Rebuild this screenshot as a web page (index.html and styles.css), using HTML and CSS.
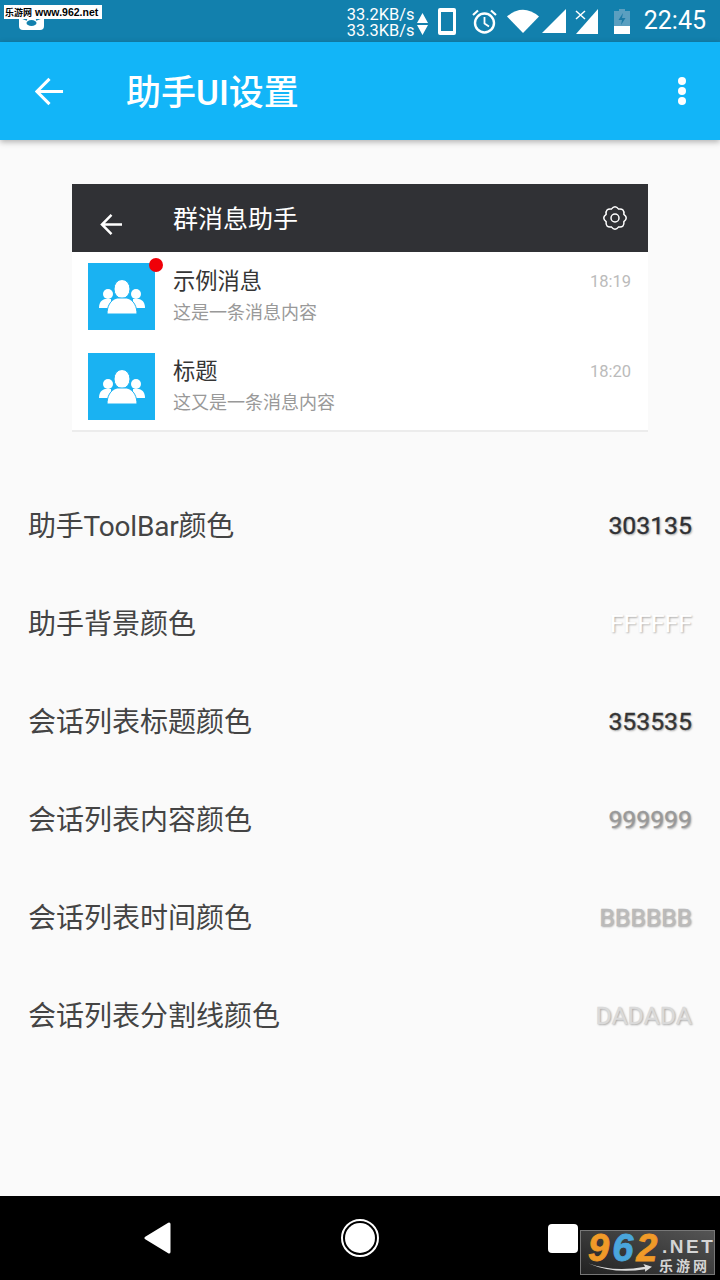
FILE: index.html
```html
<!DOCTYPE html>
<html lang="zh-CN">
<head>
  <meta charset="utf-8" />
  <meta name="viewport" content="width=device-width, initial-scale=1" />
  <title>助手UI设置</title>
  <link rel="stylesheet" href="styles.css">
</head>
<body>
  <div class="phone">
    <!-- status bar -->
    <div class="statusbar">
      <svg class="pig" viewBox="0 0 25 15"><path d="M0 0h25v11q0 4-4 4H4q-4 0-4-4z" fill="#fff"/><ellipse cx="12.500" cy="8" rx="5" ry="3" fill="#1280ad"/><path d="M3 3l5 2M22 3l-5 2" stroke="#1280ad" stroke-width="1.500"/></svg>
      <div class="speed">33.2KB/s<br>33.3KB/s</div>
      <svg class="updown" viewBox="0 0 11 22"><path d="M5.500 0L11 10H0z M0 12h11L5.500 22z" fill="#fff"/></svg>
      <svg class="ic-phone" viewBox="0 0 18 27"><path d="M2 0h14a2 2 0 0 1 2 2v23a2 2 0 0 1-2 2H2a2 2 0 0 1-2-2V2a2 2 0 0 1 2-2zm1 4v19h12V4z" fill="#fff" fill-rule="evenodd"/></svg>
      <svg class="ic-alarm" viewBox="0 0 25 25" fill="none" stroke="#fff"><circle cx="12.500" cy="14" r="9.500" stroke-width="2.400"/><path d="M12.500 8v6.500l4.500 3" stroke-width="1.800"/><path d="M1 6l5-4.500M24 6l-5-4.500" stroke-width="2.200"/></svg>
      <svg class="ic-wifi" viewBox="0 0 32 24"><path d="M0 7.500Q16-6 32 7.500L16 24z" fill="#fff"/></svg>
      <svg class="ic-signal" viewBox="0 0 24 24"><path d="M24 0v24H0z" fill="#fff"/></svg>
      <svg class="ic-signal2" viewBox="0 0 24 25"><path d="M23 0v25H1z" fill="#fff"/><path d="M1 2l9 8M10 2l-9 8" stroke="#fff" stroke-width="1.500"/></svg>
      <svg class="ic-battery" viewBox="0 0 16 25"><path d="M5 0h6v2h5v23H0V2h5z" fill="#5b9fc0"/><path d="M0 17h16v8H0z" fill="#fff"/><path d="M9 4L4.500 11H8l-1 5 4.500-7H8z" fill="#1c7aa5"/></svg>
      <span class="clock">22:45</span>
    </div>

    <!-- app toolbar -->
    <header class="toolbar">
      <svg class="back" viewBox="0 0 30 30" fill="none" stroke="#fff" stroke-width="3.200"><path d="M29 15H3M15 2L2 15l13 13"/></svg>
      <h1 class="toolbar-title">助手UI设置</h1>
      <div class="more"><i></i><i></i><i></i></div>
    </header>

    <main class="content">
      <!-- preview card -->
      <section class="preview">
        <div class="preview-head">
          <svg class="preview-back" viewBox="0 0 24 22" fill="none" stroke="#fff" stroke-width="2.600"><path d="M23 11H2M12 1L2 11l10 10"/></svg>
          <span class="preview-title">群消息助手</span>
          <svg class="gear" viewBox="0 0 24 24" fill="none" stroke="#fff" stroke-width="1.500" stroke-linejoin="round"><path d="M20.870 8.330Q25.600 12 20.870 15.670Q21.620 21.620 15.670 20.870Q12 25.600 8.330 20.870Q2.380 21.620 3.130 15.670Q-1.600 12 3.130 8.330Q2.380 2.380 8.330 3.130Q12-1.600 15.670 3.130Q21.620 2.380 20.870 8.330z"/><circle cx="12" cy="12" r="4"/></svg>
        </div>
        <div class="msg">
          <div class="avatar">
            <svg viewBox="0 0 46 34" fill="#fff"><circle cx="9" cy="14" r="5"/><path d="M0 28c0-5 2-8 6-9h6v9z"/><circle cx="37" cy="14" r="5"/><path d="M46 28c0-5-2-8-6-9h-6v9z"/><g stroke="#1ab2f2"><ellipse cx="23" cy="9" rx="8" ry="9.500"/><path d="M8 34c0-7 3-14 10-16h10c7 2 10 9 10 16z"/></g></svg>
            <b class="dot"></b>
          </div>
          <div class="msg-text">
            <div class="msg-title">示例消息</div>
            <div class="msg-sub">这是一条消息内容</div>
          </div>
          <span class="msg-time">18:19</span>
        </div>
        <div class="msg">
          <div class="avatar">
            <svg viewBox="0 0 46 34" fill="#fff"><circle cx="9" cy="14" r="5"/><path d="M0 28c0-5 2-8 6-9h6v9z"/><circle cx="37" cy="14" r="5"/><path d="M46 28c0-5-2-8-6-9h-6v9z"/><g stroke="#1ab2f2"><ellipse cx="23" cy="9" rx="8" ry="9.500"/><path d="M8 34c0-7 3-14 10-16h10c7 2 10 9 10 16z"/></g></svg>
          </div>
          <div class="msg-text">
            <div class="msg-title">标题</div>
            <div class="msg-sub">这又是一条消息内容</div>
          </div>
          <span class="msg-time">18:20</span>
        </div>
      </section>

      <!-- colour settings -->
      <ul class="settings">
        <li><span class="label label-latin">助手ToolBar颜色</span><span class="val val-toolbar">303135</span></li>
        <li><span class="label">助手背景颜色</span><span class="val val-bg">FFFFFF</span></li>
        <li><span class="label">会话列表标题颜色</span><span class="val val-title">353535</span></li>
        <li><span class="label">会话列表内容颜色</span><span class="val val-content">999999</span></li>
        <li><span class="label">会话列表时间颜色</span><span class="val val-time">BBBBBB</span></li>
        <li><span class="label">会话列表分割线颜色</span><span class="val val-line">DADADA</span></li>
      </ul>
    </main>

    <!-- nav bar -->
    <nav class="navbar">
      <svg class="nav-back" viewBox="0 0 27 32"><path d="M25 2v28L2 16z" fill="#fff" stroke="#fff" stroke-width="3" stroke-linejoin="round"/></svg>
      <div class="nav-home"><i></i></div>
      <div class="nav-recent"></div>
    </nav>

    <!-- watermarks -->
    <div class="wm-top"><span>乐游网</span>www.962.net</div>
    <div class="wm-bottom">
      <div class="wm-num"><span class="or">9</span><span class="bl">6</span><span class="or">2</span></div>
      <div class="wm-net">.NET</div>
      <div class="wm-cn">乐游网</div>
      <svg class="wm-swoosh" viewBox="0 0 74 12"><path d="M0 1Q30 12 66 5l-2-3 10 3-8 6 0-3Q30 14 0 1z" fill="#ddd"/></svg>
    </div>
  </div>
</body>
</html>
```

FILE: styles.css
```css
*{
    box-sizing:border-box;
}
html,body{
    margin:0;
    padding:0;
}
body{
    font-family:Roboto,"Noto Sans CJK SC",sans-serif;
    background:#fafafa;
}
.phone{
    position:relative;
    width:720px;
    height:1280px;
    display:flex;
    flex-direction:column;
    overflow:hidden;
    background:#fafafa;
}

/* status bar */
.statusbar{
    height:42px;
    flex:none;
    background:#1280ad;
    color:#fff;
    display:flex;
    align-items:center;
    padding:0 14px 0 19px;
}
.pig{
    width:25px;
    height:15px;
    align-self:flex-start;
    margin-top:15px;
    margin-right:auto;
}
.speed{
    font-size:16.400px;
    line-height:16px;
    width:70px;
    margin-top:3px;
}
.updown{
    width:11px;
    height:22px;
    margin-top:5px;
    margin-right:10px;
}
.ic-phone{
    width:18px;
    height:27px;
    margin-right:16px;
}
.ic-alarm{
    width:25px;
    height:25px;
    margin-right:10px;
}
.ic-wifi{
    width:32px;
    height:24px;
    margin-right:3px;
}
.ic-signal{
    width:24px;
    height:24px;
    margin-right:9px;
}
.ic-signal2{
    width:24px;
    height:25px;
    margin-top:1px;
    margin-right:15px;
}
.ic-battery{
    width:16px;
    height:25px;
    margin-right:14px;
}
.clock{
    font-size:25px;
    line-height:30px;
}

/* toolbar */
.toolbar{
    height:98px;
    flex:none;
    background:#12b5f8;
    display:flex;
    align-items:center;
    padding:0 34px 0 35px;
    box-shadow:0 2px 6px rgba(0,0,0,.3);
    position:relative;
}
.back{
    width:29px;
    height:29px;
    margin-right:62px;
}
.toolbar-title{
    margin:0 0 4px;
    font-size:35px;
    font-weight:500;
    color:#fff;
    flex:1;
}
.more{
    display:flex;
    flex-direction:column;
    gap:2px;
}
.more i{
    display:block;
    width:8px;
    height:8px;
    border-radius:50%;
    background:#fff;
}

/* preview */
.content{
    flex:1;
    padding-top:44px;
}
.preview{
    width:576px;
    height:248px;
    margin:0 auto;
    background:#fff;
    border-bottom:2px solid #ececec;
}
.preview-head{
    height:68px;
    background:#303135;
    display:flex;
    align-items:center;
    padding:0 21px 0 28px;
}
.preview-back{
    width:23px;
    height:21px;
    margin-top:12px;
    margin-right:50px;
}
.preview-title{
    flex:1;
    font-size:25px;
    color:#fff;
    margin-bottom:3px;
}
.gear{
    width:24px;
    height:24px;
}
.msg{
    height:90px;
    display:flex;
    align-items:flex-start;
    padding:11px 17px 0 16px;
}
.avatar{
    position:relative;
    width:67px;
    height:67px;
    flex:none;
    background:#1ab2f2;
    display:flex;
    align-items:center;
    justify-content:center;
    margin-right:18px;
}
.avatar svg{
    width:46px;
    height:34px;
}
.dot{
    position:absolute;
    top:-5px;
    right:-8px;
    width:14px;
    height:14px;
    border-radius:50%;
    background:#f00008;
}
.msg-text{
    flex:1;
}
.msg-title{
    font-size:22.250px;
    line-height:30px;
    color:#353535;
    margin-top:3px;
}
.msg-sub{
    font-size:18px;
    line-height:26px;
    color:#999;
    margin-top:4px;
}
.msg-time{
    font-size:16.500px;
    line-height:22px;
    color:#bbb;
    margin-top:8px;
}

/* settings list */
.settings{
    list-style:none;
    margin:45px 0 0;
    padding:0 28px;
}
.settings li{
    height:98px;
    display:flex;
    align-items:center;
    justify-content:space-between;
}
.label{
    font-size:28px;
    color:#444;
    margin-bottom:4px;
}
.label-latin{
    letter-spacing:-.2px;
}
.val{
    font-size:24.800px;
    font-weight:400;
    margin-bottom:1px;
    -webkit-text-stroke:.3px currentColor;
    text-shadow:1px 1px 2px rgba(0,0,0,.35);
}
.val-toolbar{ color:#303135; }
.val-bg{ color:#fff; }
.val-title{ color:#353535; }
.val-content{ color:#999; }
.val-time{ color:#bbb; }
.val-line{ color:#dadada; }

/* nav bar */
.navbar{
    height:84px;
    flex:none;
    background:#000;
    display:flex;
    align-items:center;
    justify-content:space-between;
    padding:0 142px 0 144px;
}
.nav-back{
    width:27px;
    height:32px;
}
.nav-home{
    width:38px;
    height:38px;
    border:2px solid #fff;
    border-radius:50%;
    padding:2px;
}
.nav-home i{
    display:block;
    width:100%;
    height:100%;
    border-radius:50%;
    background:#fff;
}
.nav-recent{
    width:30px;
    height:29px;
    border-radius:4px;
    background:#fff;
}

/* watermarks */
.wm-top{
    position:absolute;
    left:4px;
    top:5px;
    width:98px;
    height:14px;
    background:#fff;
    color:#000;
    font-family:"Liberation Sans","Noto Sans CJK SC",sans-serif;
    font-size:10.500px;
    font-weight:700;
    line-height:14px;
    white-space:nowrap;
    padding-left:1px;
}
.wm-top span{
    font-size:9px;
    margin-right:3px;
}
.wm-bottom{
    position:absolute;
    left:580px;
    top:1230px;
    width:135px;
    height:45px;
    background:linear-gradient(20deg,#222,#555);
    border:1px solid #777;
}
.wm-num{
    position:absolute;
    left:7px;
    top:-2px;
    font-family:"Liberation Sans",sans-serif;
    font-size:38px;
    font-weight:700;
    font-style:italic;
    line-height:38px;
    letter-spacing:3px;
    -webkit-text-stroke:.8px currentColor;
}
.or{ color:#f09a28; }
.bl{ color:#4aa6dc; }
.wm-net{
    position:absolute;
    left:81px;
    top:5px;
    color:#d5d5d5;
    font-family:"Liberation Sans",sans-serif;
    font-size:19px;
    font-weight:700;
    line-height:22px;
    letter-spacing:2.500px;
}
.wm-cn{
    position:absolute;
    left:78px;
    top:26px;
    color:#d5d5d5;
    font-size:14px;
    font-weight:700;
    line-height:18px;
    letter-spacing:3px;
    white-space:nowrap;
}
.wm-swoosh{
    position:absolute;
    left:7px;
    top:31px;
    width:64px;
    height:11px;
}
```
